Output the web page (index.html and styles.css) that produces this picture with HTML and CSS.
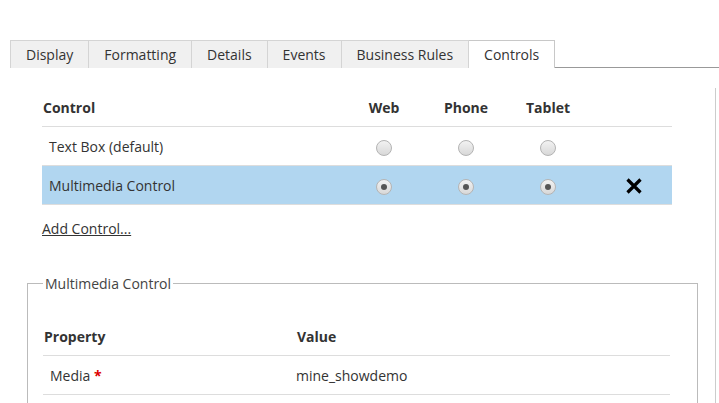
FILE: index.html
```html
<!DOCTYPE html>
<html>
<head>
<meta charset="utf-8">
<link rel="stylesheet" href="styles.css">
</head>
<body>
<div class="page">
  <div class="tabs">
    <div class="tab">Display</div>
    <div class="tab">Formatting</div>
    <div class="tab">Details</div>
    <div class="tab">Events</div>
    <div class="tab">Business Rules</div>
    <div class="tab active">Controls</div>
    <div class="tab-fill"></div>
  </div>
  <div class="panel">
    <table class="ctl">
      <colgroup>
        <col class="c-name"><col class="c-dev"><col class="c-dev"><col class="c-dev"><col class="c-del">
      </colgroup>
      <thead>
        <tr><th class="name">Control</th><th>Web</th><th>Phone</th><th>Tablet</th><th></th></tr>
      </thead>
      <tbody>
        <tr>
          <td class="name">Text Box (default)</td>
          <td><span class="radio"></span></td>
          <td><span class="radio"></span></td>
          <td><span class="radio"></span></td>
          <td></td>
        </tr>
        <tr class="sel">
          <td class="name">Multimedia Control</td>
          <td><span class="radio on"></span></td>
          <td><span class="radio on"></span></td>
          <td><span class="radio on"></span></td>
          <td><svg class="del" width="18" height="18" viewBox="0 0 18 18"><path d="M2.5 2.5 L15.5 15.5 M15.5 2.5 L2.5 15.5" stroke="#000" stroke-width="3.2" fill="none"/></svg></td>
        </tr>
      </tbody>
    </table>
    <a class="add">Add Control...</a>
    <fieldset class="box">
      <legend>Multimedia Control</legend>
      <table class="props">
        <colgroup><col class="p-name"><col></colgroup>
        <thead><tr><th class="pn">Property</th><th>Value</th></tr></thead>
        <tbody><tr><td class="pn">Media <span class="req">*</span></td><td>mine_showdemo</td></tr></tbody>
      </table>
    </fieldset>
  </div>
</div>
</body>
</html>
```
FILE: styles.css
```css
html, body { margin: 0; padding: 0; background: #fff; }
body {
  font-family: "Open Sans", "Noto Sans", sans-serif;
  font-size: 14px;
  color: #333;
  overflow: hidden;
}
.page { padding-top: 40px; height: 363px; overflow: hidden; }
.tabs { display: flex; padding-left: 10px; height: 28px; }
.tab {
  box-sizing: border-box;
  height: 28px;
  background: #f0f0f0;
  border: 1px solid #d4d4d4;
  border-bottom: none;
  border-left: none;
  padding: 0 15px;
  line-height: 27px;
  color: #333;
  white-space: nowrap;
}
.tab:first-child { border-left: 1px solid #d4d4d4; }
.tab.active { background: #fff; border-color: #c8c8c8; }
.tab-fill { flex: 1; border-bottom: 1px solid #999; }
.panel {
  margin-top: 20px;
  width: 716px;
  box-sizing: border-box;
  border-right: 1px solid #ccc;
  padding-left: 27px;
  padding-bottom: 40px;
}
.ctl { margin-left: 15px; border-collapse: collapse; width: 630px; table-layout: fixed; }
.c-name { width: 301px; }
.c-dev { width: 82px; }
.c-del { width: 83px; }
.ctl th { font-weight: bold; height: 38px; text-align: center; color: #333; padding: 0; border-bottom: 1px solid #ddd; }
.ctl th.name { text-align: left; padding-left: 1px; }
.ctl td { height: 38px; padding: 0; text-align: center; border-bottom: 1px solid #ddd; }
.ctl td.name { text-align: left; padding-left: 7px; }
.ctl tr.sel td { background: #b1d6f0; }
.radio {
  display: inline-block;
  width: 14px; height: 14px;
  border-radius: 50%;
  border: 1px solid #b4b4b4;
  background: linear-gradient(#f2f2f2, #d8d8d8);
  vertical-align: middle;
  position: relative;
}
.radio.on::after {
  content: "";
  position: absolute;
  left: 4px; top: 4px;
  width: 6px; height: 6px;
  border-radius: 50%;
  background: #555;
}
.del { vertical-align: middle; margin-left: 6px; }
.add {
  display: inline-block;
  margin-left: 15px;
  margin-top: 14px;
  color: #333;
  text-decoration: underline;
}
.box {
  margin: 36px 0 0 0;
  width: 671px;
  box-sizing: border-box;
  border: 1px solid #bbb;
  padding: 24px 27px 40px 15px;
}
.box legend { padding: 0 2px; margin-left: 0; color: #444; }
.props { border-collapse: collapse; width: 627px; table-layout: fixed; }
.p-name { width: 253px; }
.props th { text-align: left; font-weight: bold; height: 38px; padding: 0 0 0 1px; border-bottom: 1px solid #ddd; }
.props td { height: 38px; padding: 0; border-bottom: 1px solid #ddd; }
.props .pn { padding-left: 7px; }
.props th.pn { padding-left: 1px; }
.req { color: #d00; font-weight: bold; }
```
